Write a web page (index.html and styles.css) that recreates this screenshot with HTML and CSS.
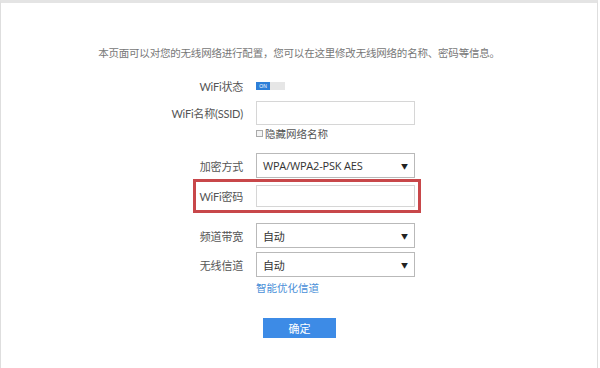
FILE: index.html
```html
<!DOCTYPE html>
<html lang="zh-CN">
<head>
<meta charset="utf-8">
<title>无线设置</title>
<link rel="stylesheet" href="styles.css">
</head>
<body>
<div class="frame">
  <p class="intro">本页面可以对您的无线网络进行配置，您可以在这里修改无线网络的名称、密码等信息。</p>
  <div class="form">
    <div class="row row-toggle">
      <span class="label">WiFi状态</span>
      <span class="toggle"><span class="on">ON</span><span class="off"></span></span>
    </div>
    <div class="row row-input">
      <span class="label">WiFi名称(SSID)</span>
      <span class="input"></span>
    </div>
    <div class="row row-check">
      <span class="label"></span>
      <span class="check"><span class="box"></span>隐藏网络名称</span>
    </div>
    <div class="row row-select first-select">
      <span class="label">加密方式</span>
      <span class="select"><span class="val">WPA/WPA2-PSK AES</span><span class="arrow">▼</span></span>
    </div>
    <div class="row highlight">
      <span class="label">WiFi密码</span>
      <span class="input small"></span>
    </div>
    <div class="row row-select bw">
      <span class="label">频道带宽</span>
      <span class="select"><span class="val">自动</span><span class="arrow">▼</span></span>
    </div>
    <div class="row row-select ch">
      <span class="label">无线信道</span>
      <span class="select"><span class="val">自动</span><span class="arrow">▼</span></span>
    </div>
    <div class="row row-link">
      <span class="label"></span>
      <a class="link" href="#">智能优化信道</a>
    </div>
  </div>
  <div class="actions">
    <button class="btn" type="button">确定</button>
  </div>
</div>
</body>
</html>
```
FILE: styles.css
```css
html, body {
  margin: 0;
  padding: 0;
  background: #ffffff;
}
body {
  font-family: "Noto Sans CJK SC", "Open Sans", sans-serif;
  font-size: 11px;
  color: #555;
}
.frame {
  box-sizing: border-box;
  width: 598px;
  height: 368px;
  border-top: 3px solid #e4e4e4;
  border-left: 1px solid #dedede;
  border-right: 1px solid #dedede;
  padding-top: 42px;
}
.intro {
  margin: 0;
  text-align: center;
  font-size: 10.5px;
  line-height: 16px;
  color: #777;
  letter-spacing: -0.2px;
}
.form {
  margin-left: 149px;
  width: 271px;
  margin-top: 16px;
  display: flex;
  flex-direction: column;
}
.row {
  display: grid;
  grid-template-columns: 93px 159px;
  column-gap: 13px;
  align-items: center;
}
.label {
  text-align: right;
  white-space: nowrap;
  color: #555;
  font-family: "Lato", "Noto Sans CJK SC", sans-serif;
  font-size: 11px;
  letter-spacing: -0.2px;
}
.row-toggle {
  height: 18px;
}
.toggle {
  display: flex;
  width: 29px;
  height: 8px;
}
.toggle .on {
  width: 14px;
  background: #2e7fd8;
  color: #fff;
  font-family: "Liberation Sans", sans-serif;
  font-size: 5px;
  line-height: 8px;
  text-align: center;
}
.toggle .off {
  flex: 1;
  background: #e6e6e6;
}
.row-input {
  margin-top: 6px;
  height: 24px;
}
.input {
  box-sizing: border-box;
  display: block;
  height: 24px;
  border: 1px solid #d6d6d6;
  background: #fff;
}
.input.small {
  height: 22px;
}
.row-check {
  height: 17px;
}
.check {
  display: flex;
  align-items: center;
  gap: 2px;
  color: #555;
  font-size: 10.5px;
}
.check .box {
  box-sizing: border-box;
  width: 7px;
  height: 7px;
  border: 1px solid #aaa;
  background: #f4f4f4;
}
.row-select {
  height: 25px;
}
.first-select {
  margin-top: 11px;
}
.select {
  box-sizing: border-box;
  height: 25px;
  border: 1px solid #b9b9b9;
  display: flex;
  align-items: center;
  justify-content: space-between;
  padding: 0 6px 0 6px;
  color: #333;
}
.select .val {
  font-family: "Open Sans", "Noto Sans CJK SC", sans-serif;
  font-size: 11px;
  letter-spacing: -0.2px;
}
.select .arrow {
  font-size: 7px;
  color: #222;
}
.highlight {
  margin-top: 1px;
  margin-left: 43px;
  width: 228px;
  box-sizing: border-box;
  height: 34px;
  border: 3px solid #c8474a;
  grid-template-columns: 47px 159px;
  padding-right: 3px;
}
.bw {
  margin-top: 10px;
}
.ch {
  margin-top: 4px;
}
.row-link {
  height: 18px;
  margin-top: 1px;
}
.link {
  color: #4a8fd8;
  text-decoration: none;
  font-size: 10.5px;
}
.actions {
  display: flex;
  margin-top: 22px;
  padding-left: 262px;
}
.btn {
  width: 73px;
  height: 20px;
  border: 0;
  background: #3d8be6;
  color: #fff;
  font-family: "Noto Sans CJK SC", sans-serif;
  font-size: 11px;
  line-height: 20px;
  padding: 0;
}
```
